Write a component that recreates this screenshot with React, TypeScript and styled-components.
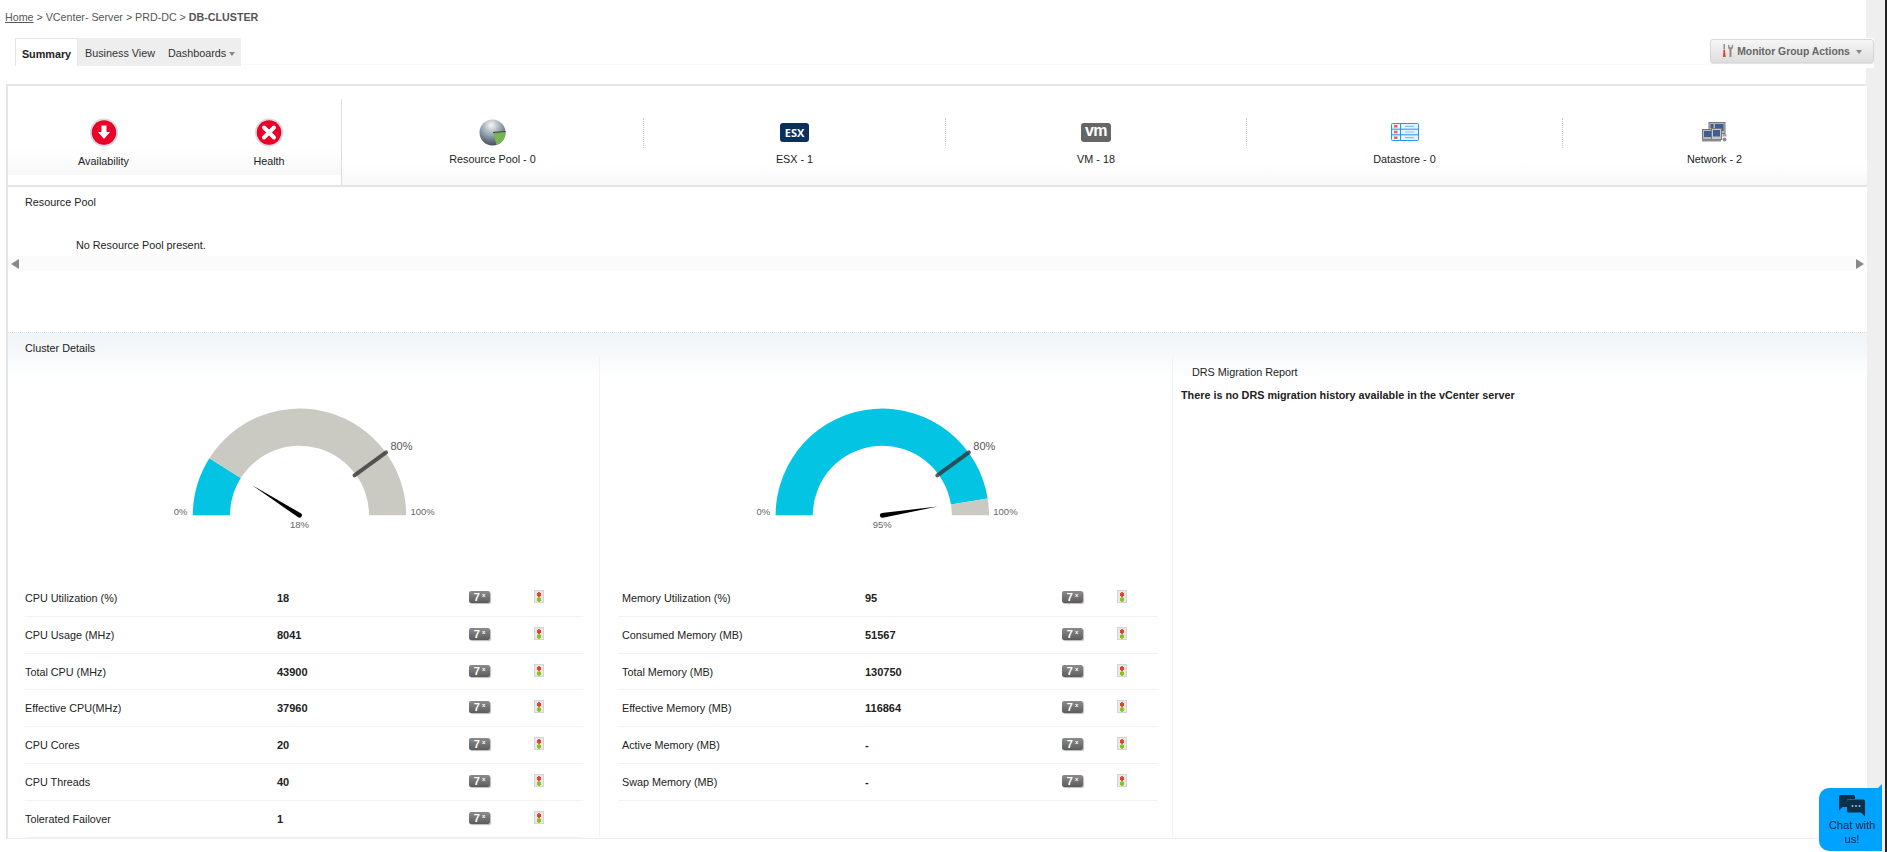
import React from "react";
import styled, {createGlobalStyle} from "styled-components";

interface MetricRow {
  label: string;
  value: string;
}

const cpuRows: MetricRow[] = [
  {label: "CPU Utilization (%)", value: "18"},
  {label: "CPU Usage (MHz)", value: "8041"},
  {label: "Total CPU (MHz)", value: "43900"},
  {label: "Effective CPU(MHz)", value: "37960"},
  {label: "CPU Cores", value: "20"},
  {label: "CPU Threads", value: "40"},
  {label: "Tolerated Failover", value: "1"},
];

const memoryRows: MetricRow[] = [
  {label: "Memory Utilization (%)", value: "95"},
  {label: "Consumed Memory (MB)", value: "51567"},
  {label: "Total Memory (MB)", value: "130750"},
  {label: "Effective Memory (MB)", value: "116864"},
  {label: "Active Memory (MB)", value: "-"},
  {label: "Swap Memory (MB)", value: "-"},
];

const GlobalStyle = createGlobalStyle`
  html, body {
    margin: 0;
    height: 100%;
    overflow: hidden;
    background: #fff;
  }

  body {
    font-family: "Liberation Sans", Arial, sans-serif;
    font-size: 10.8px;
    color: #222;
  }
`;

// gauge geometry: 0% sits on the left, 100% on the right of the half ring
const polar = (cx: number, cy: number, r: number, pct: number) => {
  const a = Math.PI * (1 - pct / 100);
  return {x: cx + r * Math.cos(a), y: cy - r * Math.sin(a)};
};

const ringSlice = (cx: number, cy: number, from: number, to: number) => {
  const outer = 106.7;
  const inner = 69.5;
  const a = polar(cx, cy, outer, from);
  const b = polar(cx, cy, outer, to);
  const c = polar(cx, cy, inner, to);
  const d = polar(cx, cy, inner, from);
  return `M${a.x} ${a.y}A${outer} ${outer} 0 0 1 ${b.x} ${b.y}L${c.x} ${c.y}A${inner} ${inner} 0 0 0 ${d.x} ${d.y}Z`;
};

const Gauge: React.FC<{value: number; cx: number}> = ({value, cx}) => {
  const cy = 125.3;
  const tip = polar(cx, cy, 56, value);
  const side = polar(0, 0, 2.4, value + 50);
  const mark0 = polar(cx, cy, 68, 80);
  const mark1 = polar(cx, cy, 107, 80);

  return (
    <GaugeSvg viewBox="0 0 320 150">
      <path d={ringSlice(cx, cy, 0, value)} fill="#03c4e3"/>
      <path d={ringSlice(cx, cy, value, 100)} fill="#cbcac2"/>
      <line x1={mark0.x} y1={mark0.y} x2={mark1.x} y2={mark1.y} stroke="#333" strokeOpacity={0.8} strokeWidth={4} strokeLinecap="round"/>
      <path d={`M${tip.x} ${tip.y}L${cx + side.x} ${cy + side.y}A2.4 2.4 0 0 1 ${cx - side.x} ${cy - side.y}Z`} fill="#000"/>
      <GaugeText x={cx - 107 - 5} y={125} textAnchor="end">0%</GaugeText>
      <GaugeText x={cx + 107 + 4} y={125}>100%</GaugeText>
      <GaugeText x={cx} y={138} textAnchor="middle">{value}%</GaugeText>
      <GaugeMark x={cx + 91} y={60}>80%</GaugeMark>
    </GaugeSvg>
  );
};

const AvailabilityIcon: React.FC = () => (
  <svg width="28" height="29" viewBox="0 0 28 29">
    <circle cx="14" cy="14.5" r="14" fill="#d9d9d9"/>
    <circle cx="14" cy="14.5" r="12.2" fill="#ea0029"/>
    <path d="M11.5 7.5h5v6.500h3.500L14 21l-6-7h3.500z" fill="#fff"/>
  </svg>
);

const HealthIcon: React.FC = () => (
  <svg width="28" height="29" viewBox="0 0 28 29">
    <circle cx="14" cy="14.5" r="14" fill="#d9d9d9"/>
    <circle cx="14" cy="14.5" r="12.2" fill="#ea0029"/>
    <path d="M9 9.500l10 10M19 9.500l-10 10" stroke="#fff" strokeWidth="4" strokeLinecap="round"/>
  </svg>
);

const ResourcePoolIcon: React.FC = () => (
  <svg width="27" height="27" viewBox="0 0 27 27">
    <defs>
      <radialGradient id="pool" cx="45%" cy="22%" r="85%">
        <stop offset="0" stopColor="#f4f7f9"/>
        <stop offset="0.5" stopColor="#8f9caa"/>
        <stop offset="1" stopColor="#38414b"/>
      </radialGradient>
    </defs>
    <circle cx="13.500" cy="13.500" r="13" fill="url(#pool)"/>
    <path d="M14 13L26.500 12A13 13 0 0 1 17.500 26z" fill="#77b553"/>
    <path d="M14 13.500L26.500 12.500" stroke="#3a434d" strokeWidth="1"/>
  </svg>
);

const DatastoreIcon: React.FC = () => (
  <svg width="28" height="18" viewBox="0 0 28 18">
    <rect x="0.5" y="0.5" width="27" height="17" rx="1" fill="#e6f3fd" stroke="#2196f3"/>
    <path d="M0.500 6.200h27M0.500 11.800h27M9.500 0.500v17" stroke="#2196f3" strokeWidth="1"/>
    <path d="M3 3.300h3.500M3 9h3.500M3 14.700h3.500" stroke="#f0684a" strokeWidth="2.400"/>
    <path d="M14 3.400h9M14 9h9M14 14.700h9" stroke="#8cc4ee" strokeWidth="1.200"/>
  </svg>
);

const NetworkIcon: React.FC = () => (
  <svg width="25" height="20" viewBox="0 0 25 20">
    <rect x="7" y="0.5" width="16" height="11" fill="#b5b8bb" stroke="#777"/>
    <rect x="13" y="2" width="8.5" height="7" fill="#3f5c93"/>
    <rect x="8.5" y="2" width="3" height="4" fill="#3f5c93"/>
    <rect x="0.5" y="7.5" width="10" height="10" fill="#b5b8bb" stroke="#777"/>
    <rect x="2" y="9" width="7" height="6" fill="#3f5c93"/>
    <rect x="9.5" y="6.5" width="10" height="11" fill="#c4c7ca" stroke="#777"/>
    <rect x="11" y="8" width="7" height="6.5" fill="#3f5c93"/>
    <rect x="0" y="17.5" width="19" height="2" fill="#8b8e91"/>
    <circle cx="22.5" cy="17.5" r="2" fill="#8b8e91"/>
    <rect x="20.5" y="12" width="4" height="2.5" fill="#a5a8ab"/>
  </svg>
);

const ToolsIcon: React.FC = () => (
  <svg width="12" height="14" viewBox="0 0 12 14">
    <path d="M1.500 6L1 13h2.600L3 6z" fill="#d8401f"/>
    <path d="M1.600 0v5.500h1.200V0z" fill="#777"/>
    <path d="M7.500 5.500V13h2V5.500A3 3 0 0 0 11.100 3V.6L9.700 1.600v1.600H7.500V1.600L6.100.6V3A3 3 0 0 0 7.500 5.500z" fill="#8c8c8c"/>
  </svg>
);

const ChatIcon: React.FC = () => (
  <svg width="26" height="22" viewBox="0 0 26 22">
    <path d="M0 1.500A1.500 1.500 0 0 1 1.500 0H14.500A1.500 1.500 0 0 1 16 1.500V4H9.500A1.500 1.500 0 0 0 8 5.500V12H3.500L0 15.500z" fill="#0c2f4a"/>
    <path d="M8 6A1.500 1.500 0 0 1 9.500 4.500H24.500A1.500 1.500 0 0 1 26 6V21.500L22 17.500H9.500A1.500 1.500 0 0 1 8 16z" fill="#0c2f4a"/>
    <circle cx="13.500" cy="11" r="1" fill="#9fc6de"/>
    <circle cx="17" cy="11" r="1" fill="#9fc6de"/>
    <circle cx="20.500" cy="11" r="1" fill="#9fc6de"/>
  </svg>
);

const Metrics: React.FC<{rows: MetricRow[]; wide?: boolean}> = ({rows, wide}) => (
  <MetricList wide={wide}>
    {rows.map((row) => (
      <Metric key={row.label} wide={wide}>
        <span>{row.label}</span>
        <MetricValue>{row.value}</MetricValue>
        <ReportIcon>7<small>x</small></ReportIcon>
        <Traffic/>
      </Metric>
    ))}
  </MetricList>
);

const App: React.FC = () => (
  <Page>
    <GlobalStyle/>
    <Content>
      <Breadcrumb><a href="#home">Home</a> &gt; VCenter- Server &gt; PRD-DC &gt; <b>DB-CLUSTER</b></Breadcrumb>

      <Toolbar>
        <Tabs>
          <ActiveTab>Summary</ActiveTab>
          <Tab>Business View</Tab>
          <Tab>Dashboards<Caret/></Tab>
        </Tabs>
        <ActionsWrap>
          <ActionsButton><ToolsIcon/>Monitor Group Actions<Caret/></ActionsButton>
        </ActionsWrap>
      </Toolbar>

      <Panel>
        <SummaryBar>
          <StatusBlock>
            <Status><AvailabilityIcon/>Availability</Status>
            <Status><HealthIcon/>Health</Status>
          </StatusBlock>
          <Stat basis={301}><IconSlot><ResourcePoolIcon/></IconSlot>Resource Pool - 0</Stat>
          <StatDivider/>
          <Stat basis={301}><IconSlot><EsxBadge>ESX</EsxBadge></IconSlot>ESX - 1</Stat>
          <StatDivider/>
          <Stat basis={300}><IconSlot><VmBadge>vm</VmBadge></IconSlot>VM - 18</Stat>
          <StatDivider/>
          <Stat basis={315}><IconSlot><DatastoreIcon/></IconSlot>Datastore - 0</Stat>
          <StatDivider/>
          <Stat basis={303}><IconSlot><NetworkIcon/></IconSlot>Network - 2</Stat>
        </SummaryBar>

        <PoolSection>
          <Heading>Resource Pool</Heading>
          <PoolMessage>No Resource Pool present.</PoolMessage>
          <Scroller>
            <ArrowLeft/>
            <ArrowRight/>
          </Scroller>
        </PoolSection>

        <ClusterSection>
          <Heading>Cluster Details</Heading>
          <Columns>
            <GaugeColumn basis={592} gaugeLeft={142}>
              <Gauge value={18} cx={149.5}/>
              <Metrics rows={cpuRows}/>
            </GaugeColumn>
            <GaugeColumn basis={573} gaugeLeft={140}>
              <Gauge value={95} cx={142.3}/>
              <Metrics rows={memoryRows} wide/>
            </GaugeColumn>
            <DrsColumn>
              <DrsTitle>DRS Migration Report</DrsTitle>
              <DrsEmpty>There is no DRS migration history available in the vCenter server</DrsEmpty>
            </DrsColumn>
          </Columns>
        </ClusterSection>
      </Panel>
    </Content>
    <Gutter/>
    <ChatWidget>
      <ChatIcon/>
      <span>Chat with us!</span>
    </ChatWidget>
  </Page>
);

export default App;

const Page = styled.div`
  display: flex;
  height: 852px;
  overflow: hidden;
`;

const Content = styled.div`
  width: 1866px;
  flex: none;
`;

const Gutter = styled.div`
  flex: 1;
  background: #efefef;
  border-right: 2px solid #222;
`;

const Breadcrumb = styled.div`
  padding: 10px 0 0 5px;
  line-height: 14px;
  font-size: 10.7px;
  color: #555;

  a {
    color: #555;
  }
`;

const Toolbar = styled.div`
  display: flex;
  justify-content: space-between;
  align-items: flex-start;
  height: 26px;
  margin: 14px -8px 0 15px;
  border-bottom: 1px dotted #f3f3f3;
`;

const Tabs = styled.div`
  display: flex;
  height: 28px;
  background: #eee;
`;

const Tab = styled.div`
  display: flex;
  align-items: center;
  padding: 2px 6px 0 7px;
  color: #333;
`;

const ActiveTab = styled(Tab)`
  width: 63px;
  justify-content: center;
  padding: 2px 0 0;
  background: #fff;
  border: 1px solid #e6e6e6;
  border-bottom: 0;
  box-sizing: border-box;
  font-weight: bold;
  color: #222;
`;

const Caret = styled.i`
  margin: 1px 0 0 3px;
  border: 3.5px solid transparent;
  border-top: 4px solid #888;
  border-bottom: 0;
`;

const ActionsWrap = styled.div`
  position: relative;
  z-index: 2;
  padding: 1px 0 5px;
  background: #fff;
`;

const ActionsButton = styled.div`
  display: flex;
  align-items: center;
  justify-content: center;
  gap: 3px;
  box-sizing: border-box;
  width: 164px;
  height: 24px;
  border: 1px solid #d8d8d8;
  border-radius: 3px;
  background: linear-gradient(#f6f6f6, #dedede);
  box-shadow: 0 1px 1px rgba(0, 0, 0, 0.12);
  font-size: 10.4px;
  font-weight: bold;
  color: #666;
`;

const Panel = styled.div`
  position: relative;
  z-index: 1;
  margin: 19px -2px 0 6px;
  background: #fff;
  border-top: 2px solid #e6e6e6;
  border-left: 2px solid #e6e6e6;
  border-right: 1px solid #eee;
  border-bottom: 1px solid #eee;
  border-top-right-radius: 4px;
`;

const SummaryBar = styled.div`
  display: flex;
  height: 99px;
  border-bottom: 2px solid #e4e4e4;
  background: linear-gradient(#fff 77%, #f8f8f8);
`;

const StatusBlock = styled.div`
  display: grid;
  grid-template-columns: 191px 140px;
  flex: 0 0 333px;
  box-sizing: content-box;
  height: 86px;
  margin-top: 13px;
  border-right: 1px solid #ddd;
  background: linear-gradient(#fff 55%, #f8f8f8 88%, #fff 88%);
`;

const Status = styled.div`
  display: flex;
  flex-direction: column;
  align-items: center;
  gap: 7px;
  padding-top: 19px;
  line-height: 14px;
`;

const Stat = styled.div<{basis: number}>`
  flex: 0 0 ${({basis}) => basis}px;
  display: flex;
  flex-direction: column;
  align-items: center;
  line-height: 14px;
`;

const IconSlot = styled.div`
  display: flex;
  align-items: center;
  justify-content: center;
  height: 30px;
  margin: 31px 0 5px;
`;

const StatDivider = styled.div`
  flex: none;
  height: 30px;
  margin-top: 32px;
  border-left: 1px dotted #ccc;
`;

const EsxBadge = styled.div`
  width: 29px;
  height: 19px;
  border-radius: 3px;
  background: #0b2f5e;
  color: #fff;
  font: bold 11px/19px "Open Sans", sans-serif;
  text-align: center;
`;

const VmBadge = styled.div`
  width: 30px;
  height: 19px;
  border-radius: 3px;
  background: #666;
  color: #fff;
  font: bold 16px/16px "Liberation Sans", sans-serif;
  letter-spacing: -0.5px;
  text-align: center;
`;

const PoolSection = styled.div`
  height: 145px;
`;

const Heading = styled.div`
  padding: 8px 0 0 17px;
  line-height: 14px;
`;

const PoolMessage = styled.div`
  margin-top: 29px;
  padding-left: 68px;
  line-height: 14px;
`;

const Scroller = styled.div`
  display: flex;
  justify-content: space-between;
  align-items: center;
  height: 15px;
  margin-top: 4px;
  padding: 0 3px 0 3px;
  background: #fbfbfb;
`;

const ArrowLeft = styled.i`
  border: 5px solid transparent;
  border-left: 0;
  border-right: 8px solid #888;
`;

const ArrowRight = styled.i`
  border: 5px solid transparent;
  border-right: 0;
  border-left: 8px solid #888;
`;

const ClusterSection = styled.div`
  height: 505px;
  border-top: 1px dotted #d5dce2;
  background: linear-gradient(#eff4f8, #fff 46px);
`;

const Columns = styled.div`
  display: flex;
  height: 481px;
  margin-top: 1px;
`;

const GaugeColumn = styled.div<{basis: number; gaugeLeft: number}>`
  flex: 0 0 ${({basis}) => basis}px;
  box-sizing: border-box;
  padding-top: 34px;
  border-right: 1px solid #f3f3f3;

  svg {
    margin-left: ${({gaugeLeft}) => gaugeLeft}px;
  }
`;

const GaugeSvg = styled.svg`
  display: block;
  width: 320px;
  height: 150px;
`;

const GaugeText = styled.text`
  font-size: 9.5px;
  fill: #666;
`;

const GaugeMark = styled.text`
  font-size: 11px;
  fill: #555;
`;

const MetricList = styled.div<{wide?: boolean}>`
  margin: 40px 0 0 ${({wide}) => wide ? 18 : 17}px;
  width: ${({wide}) => wide ? 540 : 558}px;
`;

const Metric = styled.div<{wide?: boolean}>`
  display: grid;
  grid-template-columns: ${({wide}) => wide ? "243px 197px 55px 1fr" : "252px 192px 65px 1fr"};
  align-items: center;
  box-sizing: border-box;
  height: 36.83px;
  padding-left: ${({wide}) => wide ? 4 : 0}px;
  border-bottom: 1px solid #f2f2f2;
  color: #222;
`;

const MetricValue = styled.span`
  font-size: 11px;
  font-weight: bold;
`;

const ReportIcon = styled.span`
  display: flex;
  align-items: flex-start;
  justify-content: center;
  gap: 2px;
  width: 21px;
  height: 12px;
  margin-top: -2px;
  border-radius: 2px;
  background: linear-gradient(#8c8c8c, #5c5c5c);
  box-shadow: 1px 1px 1px #bbb;
  color: #fff;
  font-size: 11px;
  font-weight: bold;
  line-height: 12px;

  small {
    font-size: 6px;
    line-height: 8px;
  }
`;

const Traffic = styled.span`
  display: block;
  box-sizing: border-box;
  width: 10px;
  height: 13px;
  margin-top: -3px;
  border: 1px solid #d5d5d5;
  background:
    radial-gradient(circle at 50% 3.5px, #e8402a 2px, transparent 2.5px),
    radial-gradient(circle at 50% 8.5px, #8cc414 2px, transparent 2.5px),
    #e8e8e8;
`;

const DrsColumn = styled.div`
  flex: 1;
  padding: 9px 0 0 8px;
  line-height: 14px;
`;

const DrsTitle = styled.div`
  padding-left: 11px;
`;

const DrsEmpty = styled.div`
  margin-top: 9px;
  font-weight: bold;
`;

const ChatWidget = styled.div`
  position: fixed;
  right: 5px;
  bottom: 1px;
  display: flex;
  flex-direction: column;
  align-items: center;
  gap: 2px;
  box-sizing: border-box;
  width: 63px;
  height: 63px;
  padding: 7px 3px 0 6px;
  border-radius: 10px 0 0 10px;
  background: #00a2ff;
  color: #0a2540;
  font-size: 11.2px;
  line-height: 13.5px;
  text-align: center;
  z-index: 5;

  &::after {
    content: "";
    position: absolute;
    top: -4px;
    right: 0;
    border-left: 4px solid transparent;
    border-bottom: 4px solid #00a2ff;
  }
`;
